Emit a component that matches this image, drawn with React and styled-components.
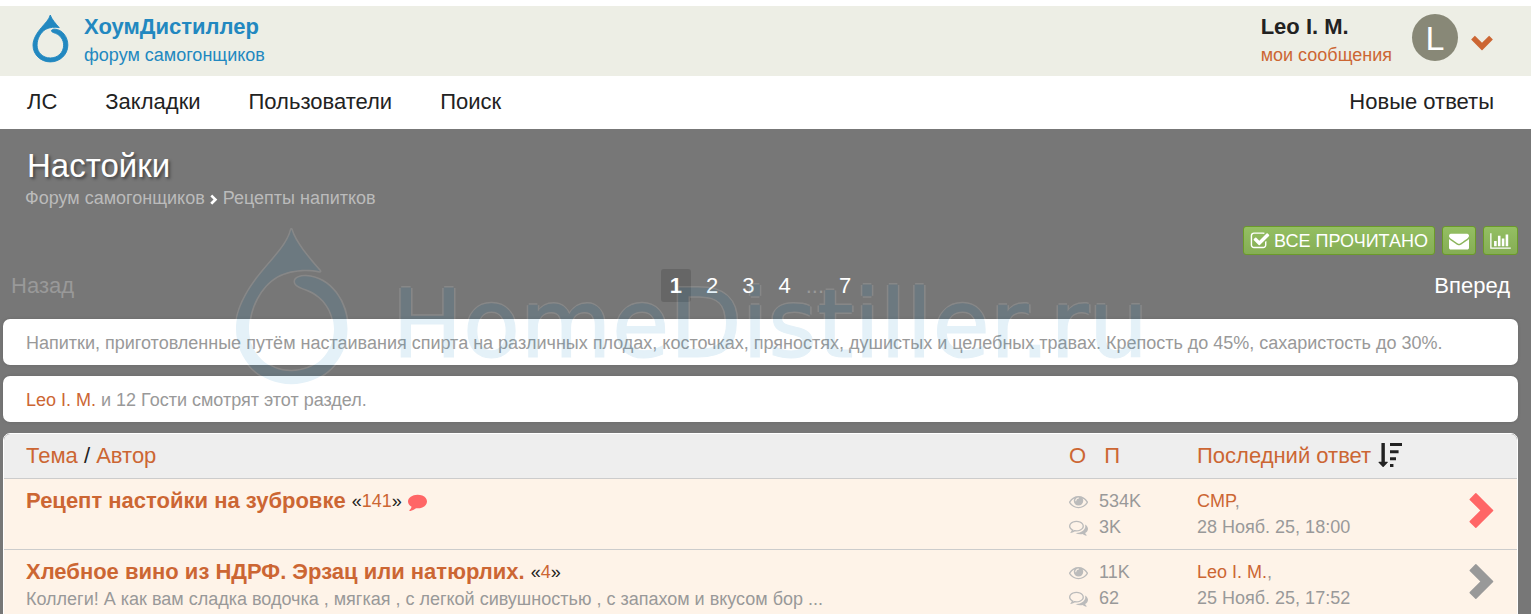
import React from 'react';
import styled, {createGlobalStyle, ThemeProvider} from 'styled-components';

const theme = {
  colors: {
    blue: '#2288c0',
    orange: '#cc6633',
    red: '#ff6666',
    dark: '#222222',
    grey: '#999999',
    light: '#bbbbbb',
    bar: '#edeee5',
    row: '#fef3e8',
    line: '#cccccc',
  },
};

const GlobalStyle = createGlobalStyle`
  * {
    box-sizing: border-box;
  }
  body {
    margin: 0;
    background: #777777;
    font-family: 'Liberation Sans', Arial, sans-serif;
    font-size: 18px;
    line-height: 26px;
    color: #222222;
  }
  a {
    color: inherit;
    text-decoration: none;
  }
`;

const ICONS = {
  check:
    'M1472 930v318q0 119-84.500 203.500t-203.500 84.500h-832q-119 0-203.500-84.500t-84.500-203.500v-832q0-119 84.500-203.500t203.500-84.500h832q63 0 117 25 15 7 18 23 3 17-9 29l-49 49q-10 10-23 10-3 0-9-2-23-6-45-6h-832q-66 0-113 47t-47 113v832q0 66 47 113t113 47h832q66 0 113-47t47-113v-254q0-13 9-22l64-64q10-10 23-10 6 0 12 3 20 8 20 29zm231-489l-814 814q-24 24-57 24t-57-24l-430-430q-24-24-24-57t24-57l110-110q24-24 57-24t57 24l263 263 647-647q24-24 57-24t57 24l110 110q24 24 24 57t-24 57z',
  envelope:
    'M1792 710v794q0 66-47 113t-113 47h-1472q-66 0-113-47t-47-113v-794q44 49 101 87 362 246 497 345 57 42 92.500 65.500t94.500 48 110 24.500h2q51 0 110-24.500t94.500-48 92.500-65.500q170-123 498-345 57-39 100-87zm0-294q0 79-49 151t-122 123q-376 261-468 325-10 7-42.500 31t-54 38.500-52 32.500-57.500 27-50 9h-2q-23 0-50-9t-57.500-27-52-32.500-54-38.500-42.500-31q-91-64-262-182.500t-205-142.500q-62-42-117-115.500t-55-136.500q0-78 41.500-130t118.500-52h1472q65 0 112.500 47t47.500 113z',
  chart:
    'M0 128h128v1408h1920v128h-2048zM384 896h256v512h-256zM768 384h256v1024h-256zM1152 640h256v768h-256zM1536 256h256v1152h-256z',
  eye:
    'M1664 960q-152-236-381-353 61 104 61 225 0 185-131.500 316.500t-316.500 131.500-316.500-131.500-131.500-316.500q0-121 61-225-229 117-381 353 133 205 333.500 326.500t434.500 121.500 434.500-121.500 333.500-326.500zm-720-384q0-20-14-34t-34-14q-125 0-214.500 89.500t-89.500 214.500q0 20 14 34t34 14 34-14 14-34q0-86 61-147t147-61q20 0 34-14t14-34zm848 384q0 34-20 69-140 230-376.500 368.500t-499.500 138.500-499.500-139-376.500-368q-20-35-20-69t20-69q140-229 376.500-368t499.500-139 499.500 139 376.500 368q20 35 20 69z',
  comments:
    'M704 384q-153 0-286 52t-211.500 141-78.500 191q0 82 53 158t149 132l97 56-35 84q34-20 62-39l44-31 53 10q78 14 153 14 153 0 286-52t211.500-141 78.500-191-78.500-191-211.500-141-286-52zm0-128q191 0 353.500 68.500t256.500 186.500 94 257-94 257-256.500 186.500-353.500 68.500q-86 0-176-16-124 88-278 128-36 9-86 16h-3q-11 0-20.500-8t-11.500-21q-1-3-1-6.500t.5-6.500 2-6l2.500-5 3.500-5.500 4-5 4.500-5 4-4.500q5-6 23-25t26-29.500 22.500-29 25-38.500 20.500-44q-124-72-195-177t-71-224q0-139 94-257t256.500-186.500 353.500-68.500zm822 1169q10 24 20.500 44t25 38.500 22.500 29 26 29.500 23 25q1 1 4 4.500t4.500 5 4 5 3.500 5.500l2.500 5 2 6 .5 6.500-1 6.500q-3 14-13 22t-22 7q-50-7-86-16-154-40-278-128-90 16-176 16-271 0-472-132 58 4 88 4 161 0 309-45t264-129q125-92 192-212t67-254q0-77-23-152 129 71 204 178t75 230q0 120-71 224.500t-195 176.500z',
  comment:
    'M1792 896q0 174-120 321.500t-326 233-450 85.500q-70 0-145-8-198 175-460 242-49 14-114 22-17 2-30.500-9t-17.500-29v-1q-3-4-.5-12t2-10 4.500-9.500l6-9 7-8.500 8-9q7-8 31-34.500t34.500-38 31-39.500 32.500-51 27-59 26-76q-157-89-247.500-220t-90.500-281q0-130 71-248.500t191-204.500 286-136.500 348-50.500q244 0 450 85.500t326 233 120 321.500z',
  right:
    'M1370 852L655 1567Q633 1589 611 1567L372 1328Q350 1306 372 1284L824 832L372 380Q350 358 372 336L611 97Q633 75 655 97L1370 812Q1390 832 1370 852z',
  down:
    'M916 1355L1690 581Q1712 559 1690 537L1451 298Q1429 276 1407 298L896 809L385 298Q363 276 341 298L102 537Q80 559 102 581L876 1355Q896 1375 916 1355z',
  sort:
    'M736 1440q0 12-10 24l-319 319q-10 9-23 9-12 0-23-9l-320-320q-15-16-7-35 8-20 30-20h192v-1376q0-14 9-23t23-9h192q14 0 23 9t9 23v1376h192q14 0 23 9t9 23zM896 1568h256v224h-256zM896 1056h448v224h-448zM896 544h640v224h-640zM896 0h896v224h-896z',
};

const Svg = styled.svg`
  display: block;
  flex: none;
  fill: currentColor;
`;

const Icon = ({name, size, wide}) => (
  <Svg
    viewBox={wide ? '0 0 2048 1792' : '0 0 1792 1792'}
    width={wide ? Math.round((size * 8) / 7) : size}
    height={size}
    aria-hidden="true"
  >
    <path d={ICONS[name]} />
  </Svg>
);

const Drop = ({width, height, stroke}) => (
  <Svg
    viewBox="0 0 112 155"
    width={width}
    height={height}
    preserveAspectRatio="none"
    overflow="visible"
    aria-hidden="true"
  >
    <path
      d="M55.300 0C59 13 73 29 84 41.700C70 39 54 40 41 47C24 57 13 79 13 99.500C13 124 32 141.700 55.300 141.700C80 141.700 98 123 98 99.500C98 82 88 67 72 60.500C65 58 59 56 59 52C59 48 65 46.500 70 46.700C94 48 111.500 72 111.500 99.500C111.500 131 86 154.700 55.300 154.700C25 154.700 0 131 0 99.500C0 79 13 58 27.300 41C39 27 52 14 55.300 0Z"
      stroke={stroke}
      strokeWidth="3"
      strokeLinejoin="round"
    />
  </Svg>
);

const Page = styled.div`
  height: 100vh;
  overflow: hidden;
  border-top: 6px solid #ffffff;
`;

const TopBar = styled.header`
  display: flex;
  justify-content: space-between;
  height: 70px;
  padding: 6px 37px 0 33px;
  background: ${({theme}) => theme.colors.bar};
`;

const Brand = styled.a`
  display: flex;
  gap: 16px;
  color: ${({theme}) => theme.colors.blue};
  svg {
    margin-top: 3px;
  }
`;

const NameBlock = styled.span`
  display: flex;
  flex-direction: column;
  gap: 1px;
`;

const Name = styled.strong`
  font-size: 22px;
  line-height: 29px;
`;

const Profile = styled.div`
  display: flex;
  gap: 20px;
`;

const OrangeLink = styled.a`
  color: ${({theme}) => theme.colors.orange};
`;

const Avatar = styled.span`
  width: 46px;
  height: 47px;
  margin-top: 2px;
  border-radius: 50%;
  background: #888877;
  color: #ffffff;
  font-size: 34px;
  line-height: 48px;
  text-align: center;
`;

const MenuButton = styled.button`
  align-self: flex-start;
  padding: 0;
  margin: 20px 0 0 -8px;
  border: 0;
  background: none;
  color: ${({theme}) => theme.colors.orange};
`;

const Nav = styled.nav`
  display: flex;
  gap: 48px;
  height: 53px;
  padding: 0 37px 0 27px;
  background: #ffffff;
  font-size: 22px;
  line-height: 51px;
  a:last-child {
    margin-left: auto;
  }
`;

const Content = styled.main`
  padding: 17px 13px 0 3px;
`;

const Title = styled.h1`
  margin: 0 24px;
  color: #ffffff;
  font-size: 33px;
  font-weight: 400;
  line-height: 39px;
  text-shadow: 2px 2px 3px #444444;
`;

const Crumbs = styled.nav`
  display: flex;
  align-items: center;
  gap: 3px;
  padding-left: 22px;
  color: ${({theme}) => theme.colors.light};
  svg {
    margin-top: 3px;
    color: #ffffff;
  }
`;

const Actions = styled.div`
  display: flex;
  justify-content: flex-end;
  gap: 7px;
  margin-top: 15px;
`;

const GreenButton = styled.button`
  display: flex;
  align-items: center;
  gap: 4px;
  height: 29px;
  padding: 0 6px;
  border: 1px solid #6b9a2a;
  border-radius: 3px;
  background: linear-gradient(#94bf62, #85ad55);
  color: #ffffff;
  font: inherit;
  text-transform: uppercase;
`;

const Pager = styled.nav`
  display: grid;
  grid-template-columns: 1fr auto 1fr;
  padding: 14px 8px 17px;
  color: #ffffff;
  font-size: 22px;
  line-height: 33px;
`;

const Prev = styled.span`
  color: ${({theme}) => theme.colors.grey};
`;

const Next = styled.a`
  text-align: right;
`;

const Pages = styled.div`
  display: flex;
  gap: 6px;
`;

const PageLink = styled.a`
  padding: 0 9px;
  border-radius: 3px;
  background: ${({$current}) => ($current ? '#666666' : 'none')};
  font-weight: ${({$current}) => ($current ? 700 : 400)};
`;

const Card = styled.section`
  margin-bottom: 11px;
  padding: 11px 23px 9px;
  border-radius: 7px;
  background: #ffffff;
  color: ${({theme}) => theme.colors.grey};
  box-shadow: 0 0 3px #666666;
`;

const TableCard = styled.section`
  overflow: hidden;
  border: 1px solid #ffffff;
  border-radius: 7px;
`;

const Table = styled.table`
  width: 100%;
  border-collapse: separate;
  border-spacing: 0;
  table-layout: fixed;
`;

const HeadRow = styled.tr`
  height: 45px;
  background: #eeeeee;
  font-size: 22px;
`;

const Th = styled.th`
  width: ${({$width}) => $width || 'auto'};
  padding: 0 0 0 ${({$first}) => ($first ? '22px' : 0)};
  border-bottom: 1px solid ${({theme}) => theme.colors.line};
  font-weight: 400;
  text-align: left;
`;

const HeadLinks = styled.div`
  display: flex;
  gap: ${({$gap}) => $gap};
`;

const Row = styled.tr`
  background: ${({theme}) => theme.colors.row};
`;

const Td = styled.td`
  padding: 9px 0 9px ${({$first}) => ($first ? '22px' : 0)};
  border-bottom: 1px solid ${({theme}) => theme.colors.line};
  color: ${({theme}) => theme.colors.grey};
  vertical-align: top;
`;

const TopicLine = styled.div`
  display: flex;
  align-items: center;
  gap: 6px;
  color: ${({theme}) => theme.colors.dark};
  svg {
    color: ${({theme}) => theme.colors.red};
  }
`;

const TopicLink = styled(OrangeLink)`
  font-size: 22px;
  font-weight: 700;
`;

const Excerpt = styled.div`
  line-height: 28px;
  margin-bottom: -2px;
`;

const Stat = styled.div`
  display: flex;
  align-items: center;
  gap: 11px;
  svg {
    color: ${({theme}) => theme.colors.light};
  }
`;

const GoLink = styled.a`
  display: block;
  padding-top: 3px;
  color: ${({theme, $fresh}) => ($fresh ? theme.colors.red : theme.colors.grey)};
`;

const Watermark = styled.div`
  position: fixed;
  top: 50%;
  left: 236px;
  display: flex;
  align-items: flex-end;
  gap: 44px;
  transform: translateY(-50%);
  opacity: 0.12;
  color: ${({theme}) => theme.colors.blue};
  white-space: nowrap;
  pointer-events: none;
  svg {
    paint-order: stroke;
  }
`;

const WatermarkText = styled.span`
  font-family: 'DejaVu Sans', Verdana, sans-serif;
  font-size: 94px;
  line-height: 120px;
  -webkit-text-stroke: 1px currentColor;
  text-shadow: 2px 0 0 #ffffff, -2px 0 0 #ffffff, 0 2px 0 #ffffff,
    0 -2px 0 #ffffff;
`;

const topics = [
  {
    id: 1,
    title: 'Рецепт настойки на зубровке',
    pages: 141,
    fresh: true,
    views: '534K',
    replies: '3K',
    author: 'CMP',
    date: '28 Нояб. 25, 18:00',
  },
  {
    id: 2,
    title: 'Хлебное вино из НДРФ. Эрзац или натюрлих.',
    pages: 4,
    excerpt:
      'Коллеги! А как вам сладка водочка , мягкая , с легкой сивушностью , с запахом и вкусом бор ...',
    views: '11K',
    replies: '62',
    author: 'Leo I. M.',
    date: '25 Нояб. 25, 17:52',
  },
];

const Topic = ({topic}) => (
  <Row>
    <Td $first>
      <TopicLine>
        <TopicLink href="#topic">{topic.title}</TopicLink>
        <span>
          «<OrangeLink href="#last">{topic.pages}</OrangeLink>»
        </span>
        {topic.fresh && <Icon name="comment" size={19} />}
      </TopicLine>
      {topic.excerpt && <Excerpt>{topic.excerpt}</Excerpt>}
    </Td>
    <Td>
      <Stat>
        <Icon name="eye" size={19} />
        {topic.views}
      </Stat>
      <Stat>
        <Icon name="comments" size={19} />
        {topic.replies}
      </Stat>
    </Td>
    <Td>
      <OrangeLink href="#user">{topic.author}</OrangeLink>,
      <br />
      {topic.date}
    </Td>
    <Td>
      <GoLink href="#last" $fresh={topic.fresh} aria-label="Последний ответ">
        <Icon name="right" size={42} />
      </GoLink>
    </Td>
  </Row>
);

const App = () => (
  <ThemeProvider theme={theme}>
    <GlobalStyle />
    <Page>
      <TopBar>
        <Brand href="#home">
          <Drop width={35} height={47} stroke="currentColor" />
          <NameBlock>
            <Name>ХоумДистиллер</Name>
            <span>форум самогонщиков</span>
          </NameBlock>
        </Brand>
        <Profile>
          <NameBlock>
            <Name>Leo I. M.</Name>
            <OrangeLink href="#messages">мои сообщения</OrangeLink>
          </NameBlock>
          <Avatar>L</Avatar>
          <MenuButton aria-label="Меню">
            <Icon name="down" size={24} />
          </MenuButton>
        </Profile>
      </TopBar>
      <Nav>
        <a href="#pm">ЛС</a>
        <a href="#bookmarks">Закладки</a>
        <a href="#users">Пользователи</a>
        <a href="#search">Поиск</a>
        <a href="#new">Новые ответы</a>
      </Nav>
      <Content>
        <Title>Настойки</Title>
        <Crumbs>
          <a href="#forum">Форум самогонщиков</a>
          <Icon name="right" size={12} />
          <a href="#recipes">Рецепты напитков</a>
        </Crumbs>
        <Actions>
          <GreenButton>
            <Icon name="check" size={20} />
            Все прочитано
          </GreenButton>
          <GreenButton aria-label="Подписаться">
            <Icon name="envelope" size={20} />
          </GreenButton>
          <GreenButton aria-label="Статистика">
            <Icon name="chart" size={18} wide />
          </GreenButton>
        </Actions>
        <Pager>
          <Prev>Назад</Prev>
          <Pages>
            <PageLink href="#1" $current>
              1
            </PageLink>
            <PageLink href="#2">2</PageLink>
            <PageLink href="#3">3</PageLink>
            <PageLink href="#4">4</PageLink>
            <Prev>...</Prev>
            <PageLink href="#7">7</PageLink>
          </Pages>
          <Next href="#next">Вперед</Next>
        </Pager>
        <Card>
          Напитки, приготовленные путём настаивания спирта на различных плодах, косточках,
          пряностях, душистых и целебных травах. Крепость до 45%, сахаристость до 30%.
        </Card>
        <Card>
          <OrangeLink href="#user">Leo I. M.</OrangeLink> и 12 Гости смотрят этот раздел.
        </Card>
        <TableCard>
          <Table>
            <thead>
              <HeadRow>
                <Th $first>
                  <OrangeLink href="#subject">Тема</OrangeLink> /{' '}
                  <OrangeLink href="#author">Автор</OrangeLink>
                </Th>
                <Th $width="128px">
                  <HeadLinks $gap="18px">
                    <OrangeLink href="#replies">О</OrangeLink>
                    <OrangeLink href="#views">П</OrangeLink>
                  </HeadLinks>
                </Th>
                <Th $width="264px">
                  <HeadLinks $gap="7px">
                    <OrangeLink href="#date">Последний ответ</OrangeLink>
                    <Icon name="sort" size={24} />
                  </HeadLinks>
                </Th>
                <Th $width="56px" />
              </HeadRow>
            </thead>
            <tbody>
              {topics.map(topic => (
                <Topic key={topic.id} topic={topic} />
              ))}
            </tbody>
          </Table>
        </TableCard>
      </Content>
      <Watermark aria-hidden="true">
        <Drop width={112} height={155} stroke="#ffffff" />
        <WatermarkText>HomeDistiller.ru</WatermarkText>
      </Watermark>
    </Page>
  </ThemeProvider>
);

export default App;
